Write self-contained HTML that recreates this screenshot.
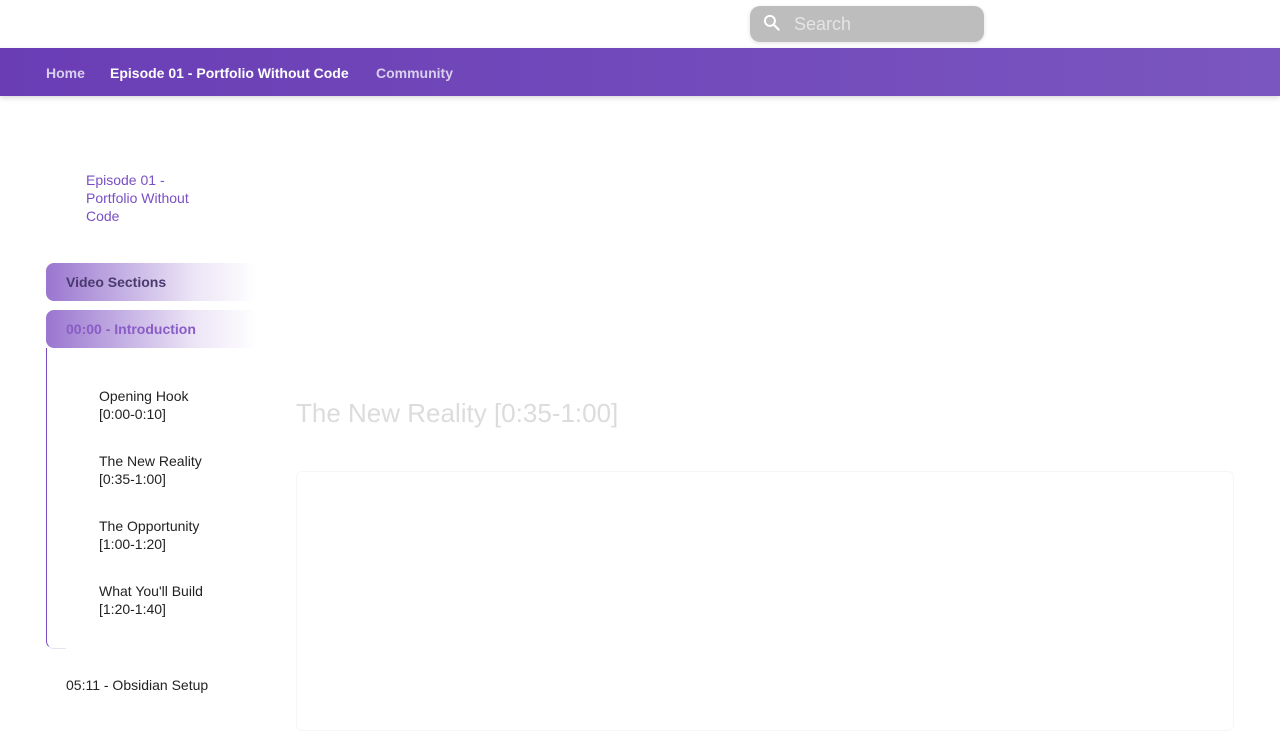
<!DOCTYPE html>
<html><head><meta charset="utf-8"><style>
*{margin:0;padding:0;box-sizing:border-box}
body{width:1280px;height:720px;overflow:hidden;background:#fff;font-family:"Liberation Sans",sans-serif;position:relative}
.top{position:absolute;left:0;top:0;width:1280px;height:48px;background:#fff}
.search{position:absolute;left:750px;top:6px;width:234px;height:36px;border-radius:10px;background:#bdbdbd;box-shadow:0 1px 4px rgba(0,0,0,.12)}
.search span{position:absolute;left:44px;top:8px;font-size:18px;color:#e4e4e4}
.search svg{position:absolute;left:12px;top:7px}
.nav{position:absolute;left:0;top:48px;width:1280px;height:48px;background:linear-gradient(90deg,#6a3db5,#7a56c0);box-shadow:0 2px 5px rgba(0,0,0,.15)}
.nav a{position:absolute;top:17px;font-size:14px;font-weight:bold;color:#d9cfee;text-decoration:none}
.ep{position:absolute;left:86px;top:171px;font-size:14px;line-height:18px;color:#7a4fc4;width:130px}
.hdr{position:absolute;left:46px;width:212px;height:38px;border-radius:8px;background:linear-gradient(90deg,#9a76d0,#ece5f6 70%,#fff);font-size:14px;font-weight:bold;padding:11px 20px}
.box{position:absolute;left:46px;top:348px;width:20px;height:301px;border-left:1.5px solid #7a4fc4;border-bottom:1px solid #e8e0f4;border-radius:0 0 0 8px}
.it{position:absolute;left:99px;font-size:14px;line-height:18px;color:#222}
.title{position:absolute;left:296px;top:398px;font-size:26px;color:#dcdcdc}
.card{position:absolute;left:296px;top:471px;width:938px;height:260px;border:1px solid #f6f6f6;border-radius:6px}
</style></head><body>
<div class="top"></div>
<div class="search"><svg width="20" height="20" viewBox="0 0 24 24"><circle cx="9.5" cy="9.5" r="6" fill="none" stroke="#fff" stroke-width="2.4"/><path d="M14 14l6 6" stroke="#fff" stroke-width="2.6" stroke-linecap="round"/></svg><span>Search</span></div>
<div class="nav"><a style="left:46px">Home</a><a style="left:110px;color:#fff">Episode 01 - Portfolio Without Code</a><a style="left:376px">Community</a></div>
<div class="ep">Episode 01 - Portfolio Without Code</div>
<div class="hdr" style="top:263px;color:#4a3a6e">Video Sections</div>
<div class="hdr" style="top:310px;color:#8a5cc6">00:00 - Introduction</div>
<div class="box"></div>
<div class="it" style="top:387px">Opening Hook<br>[0:00-0:10]</div>
<div class="it" style="top:452px">The New Reality<br>[0:35-1:00]</div>
<div class="it" style="top:517px">The Opportunity<br>[1:00-1:20]</div>
<div class="it" style="top:582px">What You'll Build<br>[1:20-1:40]</div>
<div class="it" style="left:66px;top:676px">05:11 - Obsidian Setup</div>
<div class="title">The New Reality [0:35-1:00]</div>
<div class="card"></div>
</body></html>
